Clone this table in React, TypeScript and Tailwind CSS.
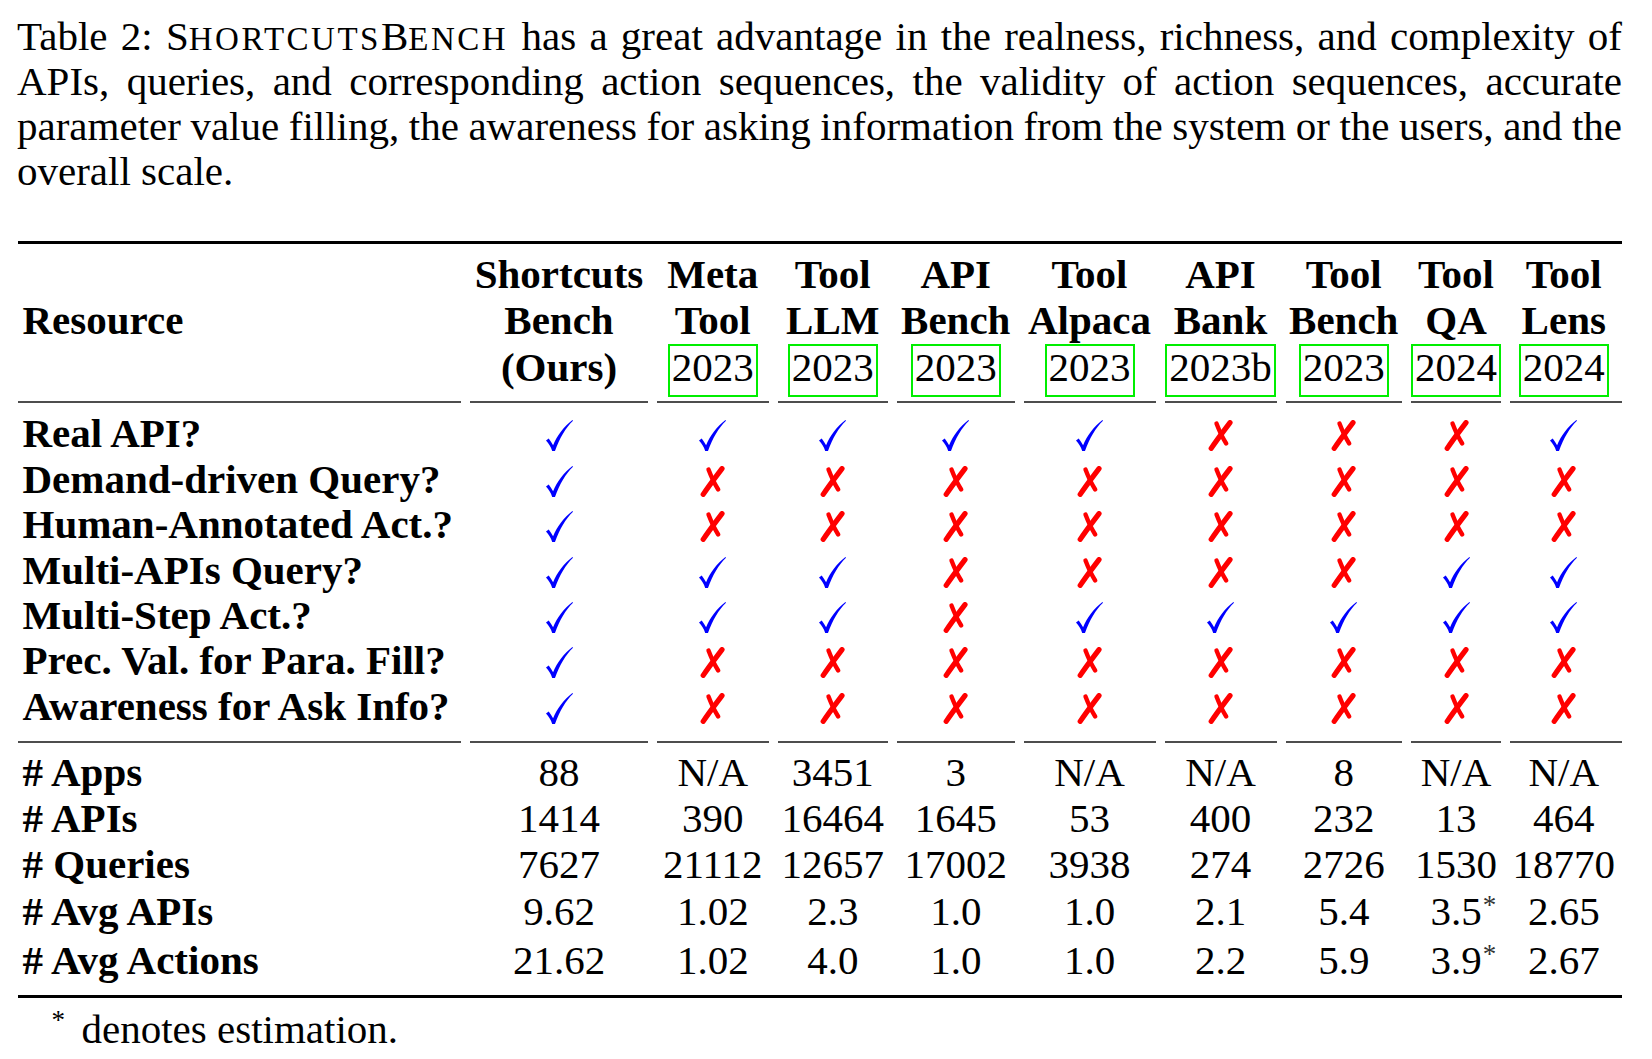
import React from "react";

// column widths taken from the cmidrule segments of the table
const GRID =
  "grid grid-cols-[447.5px_187px_120.5px_119.5px_126.5px_141px_121px_125.5px_99px_116.5px]";

const heads: { a: string; b: string; c: string; boxed: boolean }[] = [
  { a: "Shortcuts", b: "Bench", c: "(Ours)", boxed: false },
  { a: "Meta", b: "Tool", c: "2023", boxed: true },
  { a: "Tool", b: "LLM", c: "2023", boxed: true },
  { a: "API", b: "Bench", c: "2023", boxed: true },
  { a: "Tool", b: "Alpaca", c: "2023", boxed: true },
  { a: "API", b: "Bank", c: "2023b", boxed: true },
  { a: "Tool", b: "Bench", c: "2023", boxed: true },
  { a: "Tool", b: "QA", c: "2024", boxed: true },
  { a: "Tool", b: "Lens", c: "2024", boxed: true },
];

const markRows = [
  { label: "Real API?", v: "yyyyynnny" },
  { label: "Demand-driven Query?", v: "ynnnnnnnn" },
  { label: "Human-Annotated Act.?", v: "ynnnnnnnn" },
  { label: "Multi-APIs Query?", v: "yyynnnnyy" },
  { label: "Multi-Step Act.?", v: "yyynyyyyy" },
  { label: "Prec. Val. for Para. Fill?", v: "ynnnnnnnn" },
  { label: "Awareness for Ask Info?", v: "ynnnnnnnn" },
];

const numRows = [
  { label: "# Apps", h: "h-[46px]", v: ["88", "N/A", "3451", "3", "N/A", "N/A", "8", "N/A", "N/A"] },
  { label: "# APIs", h: "h-[46px]", v: ["1414", "390", "16464", "1645", "53", "400", "232", "13", "464"] },
  { label: "# Queries", h: "h-[47px]", v: ["7627", "21112", "12657", "17002", "3938", "274", "2726", "1530", "18770"] },
  { label: "# Avg APIs", h: "h-[49px]", v: ["9.62", "1.02", "2.3", "1.0", "1.0", "2.1", "5.4", "3.5*", "2.65"] },
  { label: "# Avg Actions", h: "h-[46px]", v: ["21.62", "1.02", "4.0", "1.0", "1.0", "2.2", "5.9", "3.9*", "2.67"] },
];

function Check() {
  return (
    <svg width="27" height="31" viewBox="0 0 27 31" className="inline-block align-[-4px]">
      <path
        d="M0 20.5 L2.7 18.6 C4.3 20.6 5.7 22.9 7.1 25.2 C11 16 17.5 7 26.4 0 L27 0.8 C19.5 8 13.8 18 9 31 L6.2 31 C4.9 27 3 23.6 0 20.5 Z"
        fill="#0000ff"
      />
    </svg>
  );
}

function Cross() {
  return (
    <svg width="25" height="31" viewBox="0 0 25 31" className="inline-block align-[-4px]">
      <path d="M8.5 3.5 C11 10 14 17 18.2 23.5" stroke="#ff0000" strokeWidth="4.4" strokeLinecap="round" fill="none" />
      <path d="M22 2.6 C16.5 10 9.5 19 3.2 28.4" stroke="#ff0000" strokeWidth="5.2" strokeLinecap="round" fill="none" />
    </svg>
  );
}

function SegRule({ mt }: { mt: string }) {
  return (
    <div className={`${GRID} ${mt}`}>
      {Array.from({ length: 10 }).map((_, i) => (
        <div
          key={i}
          className={`h-[2px] bg-[#4d4d4d] ${i === 0 ? "mr-[4.5px]" : i === 9 ? "ml-[4.5px]" : "mx-[4.5px]"}`}
        />
      ))}
    </div>
  );
}

function NumCell({ value }: { value: string }) {
  if (value.endsWith("*")) {
    return (
      <div className="text-center">
        {value.slice(0, -1)}
        <span className="ml-[1px] mr-[-14.5px] text-[27px] leading-none align-[11px] text-[#333]">*</span>
      </div>
    );
  }
  return <div className="text-center">{value}</div>;
}

export default function App() {
  return (
    <div className="min-h-screen bg-white text-black font-['Liberation_Serif','Times_New_Roman',serif] text-[41px]">
      <div className="w-[1605px] ml-[17px] pt-[13.7px]">
        {/* Caption */}
        <div>
          <div className="h-[45px] leading-[45px] text-justify [text-align-last:justify] [word-spacing:-3px]">
            Table 2: S<span className="text-[33px] tracking-[2.5px]">HORTCUTS</span>B
            <span className="text-[33px] tracking-[2.5px]">ENCH</span> has a great advantage in the realness, richness,
            and complexity of
          </div>
          <div className="h-[45px] leading-[45px] text-justify [text-align-last:justify] [word-spacing:-3px]">
            APIs, queries, and corresponding action sequences, the validity of action sequences, accurate
          </div>
          <div className="h-[45px] leading-[45px] text-justify [text-align-last:justify] [word-spacing:-3px]">
            parameter value filling, the awareness for asking information from the system or the users, and the
          </div>
          <div className="h-[45px] leading-[45px]">overall scale.</div>
        </div>

        {/* Table */}
        <div className="ml-[1px] mt-[47.8px]">
          <div className="h-[3px] bg-black" />

          <div className={`${GRID} mt-[6.5px] font-bold`}>
            <div className="pl-[4.5px]">
              <div className="h-[46.5px]" />
              <div className="h-[46.5px] leading-[46.5px]">Resource</div>
            </div>
            {heads.map((h) => (
              <div key={h.a + h.b} className="flex flex-col items-center">
                <div className="h-[46.5px] leading-[46.5px]">{h.a}</div>
                <div className="h-[46.5px] leading-[46.5px]">{h.b}</div>
                {h.boxed ? (
                  <div className="border-2 border-[#00ee00] px-[2px] pb-[7px] leading-[42px] font-normal">{h.c}</div>
                ) : (
                  <div className="h-[46.5px] leading-[46.5px]">{h.c}</div>
                )}
              </div>
            ))}
          </div>

          <SegRule mt="mt-[4.5px]" />

          <div className="mt-[8px]">
            {markRows.map((r) => (
              <div key={r.label} className={`${GRID} h-[45.4px] leading-[45.4px]`}>
                <div className="pl-[4.5px] font-bold whitespace-nowrap">{r.label}</div>
                {r.v.split("").map((m, i) => (
                  <div key={i} className="text-center">
                    {m === "y" ? <Check /> : <Cross />}
                  </div>
                ))}
              </div>
            ))}
          </div>

          <SegRule mt="mt-[11.7px]" />

          <div className="mt-[6.2px]">
            {numRows.map((r) => (
              <div key={r.label} className={`${GRID} ${r.h} leading-[46px]`}>
                <div className="pl-[4.5px] font-bold whitespace-nowrap">{r.label}</div>
                {r.v.map((v, i) => (
                  <NumCell key={i} value={v} />
                ))}
              </div>
            ))}
          </div>

          <div className="mt-[11.8px] h-[3px] bg-black" />
        </div>

        {/* Footnote */}
        <p className="mt-[8.7px] pl-[34.5px] leading-[45px]">
          <span className="inline-block w-[30px] text-[27px] leading-none align-[14px]">*</span>denotes estimation.
        </p>
      </div>
    </div>
  );
}
